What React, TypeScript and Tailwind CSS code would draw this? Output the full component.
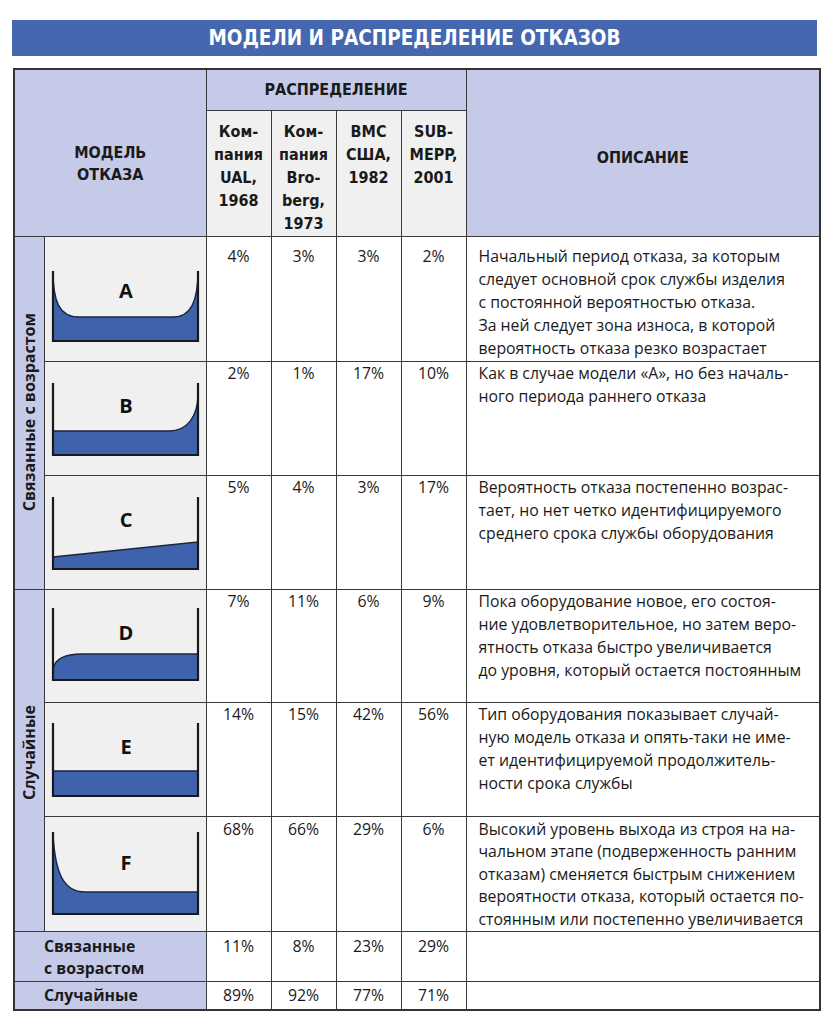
import React from "react";

const body = { fontFamily: '"Open Sans", "Noto Sans", sans-serif' };
const cond = { fontFamily: '"Liberation Sans Narrow", "DejaVu Sans Condensed", "Liberation Sans", sans-serif' };

type ChartDef = {
  letter: string;
  h: number;
  top: number;
  bottom: number;
  fill: string;
  curve: string;
  ly: number;
  pt: number;
  lh: number;
};

const charts: ChartDef[] = [
  {
    letter: "A",
    h: 125,
    top: 34,
    bottom: 104,
    fill: "M8,34 C8,64 14,80 34,80 L128,80 C146,80 153,64 153,34 L153,104 L8,104 Z",
    curve: "M8,34 C8,64 14,80 34,80 L128,80 C146,80 153,64 153,34",
    ly: 54,
    pt: 8,
    lh: 23,
  },
  {
    letter: "B",
    h: 114,
    top: 21,
    bottom: 93,
    fill: "M8,69 L124,69 C142,69 153,55 153,32 L153,93 L8,93 Z",
    curve: "M8,69 L124,69 C142,69 153,55 153,32",
    ly: 44,
    pt: 0,
    lh: 23,
  },
  {
    letter: "C",
    h: 114,
    top: 21,
    bottom: 93,
    fill: "M8,81 L153,66 L153,93 L8,93 Z",
    curve: "M8,81 L153,66",
    ly: 44,
    pt: 0,
    lh: 23,
  },
  {
    letter: "D",
    h: 113,
    top: 18,
    bottom: 90,
    fill: "M8,79 C10,68 20,64 37,64 L153,64 L153,90 L8,90 Z",
    curve: "M8,79 C10,68 20,64 37,64 L153,64",
    ly: 43,
    pt: 0,
    lh: 23,
  },
  {
    letter: "E",
    h: 114,
    top: 20,
    bottom: 93,
    fill: "M8,68 L153,68 L153,93 L8,93 Z",
    curve: "M8,68 L153,68",
    ly: 44,
    pt: 0,
    lh: 23,
  },
  {
    letter: "F",
    h: 115,
    top: 15,
    bottom: 97,
    fill: "M8,17 C10,55 18,75 40,75 L153,75 L153,97 L8,97 Z",
    curve: "M8,17 C10,55 18,75 40,75 L153,75",
    ly: 46,
    pt: 1,
    lh: 22.5,
  },
];

function Chart({ c }: { c: ChartDef }) {
  const h = c.h - 2;
  return (
    <svg width={162} height={h} viewBox={`0 0 162 ${h}`} className="block">
      <path d={c.fill} fill="#3f62ad" />
      <path d={c.curve} fill="none" stroke="#1c2540" strokeWidth={1.5} />
      <path
        d={`M8,${c.top} L8,${c.bottom} L153,${c.bottom} L153,${c.top}`}
        fill="none"
        stroke="#1a1a1a"
        strokeWidth={2.2}
      />
      <text
        x={81}
        y={c.ly + 7}
        textAnchor="middle"
        fontSize={20}
        fontWeight={700}
        fill="#111"
        fontFamily='"Open Sans", "Noto Sans", sans-serif'
      >
        {c.letter}
      </text>
    </svg>
  );
}

const values = [
  ["4%", "3%", "3%", "2%"],
  ["2%", "1%", "17%", "10%"],
  ["5%", "4%", "3%", "17%"],
  ["7%", "11%", "6%", "9%"],
  ["14%", "15%", "42%", "56%"],
  ["68%", "66%", "29%", "6%"],
];

const descs: string[][] = [
  [
    "Начальный период отказа, за которым",
    "следует основной срок службы изделия",
    "с постоянной вероятностью отказа.",
    "За ней следует зона износа, в которой",
    "вероятность отказа резко возрастает",
  ],
  ["Как в случае модели «А», но без началь-", "ного периода раннего отказа"],
  [
    "Вероятность отказа постепенно возрас-",
    "тает, но нет четко идентифицируемого",
    "среднего срока службы оборудования",
  ],
  [
    "Пока оборудование новое, его состоя-",
    "ние удовлетворительное, но затем веро-",
    "ятность отказа быстро увеличивается",
    "до уровня, который остается постоянным",
  ],
  [
    "Тип оборудования показывает случай-",
    "ную модель отказа и опять-таки не име-",
    "ет идентифицируемой продолжитель-",
    "ности срока службы",
  ],
  [
    "Высокий уровень выхода из строя на на-",
    "чальном этапе (подверженность ранним",
    "отказам) сменяется быстрым снижением",
    "вероятности отказа, который остается по-",
    "стоянным или постепенно увеличивается",
  ],
];

const bd = "border border-[#3a3a3a]";

export default function App() {
  return (
    <div className="w-[829px] h-[1024px] bg-white px-[12px] pt-[20px] text-[#1a1a1a]" style={body}>
      <div
        className="h-[36px] bg-[#4567b0] flex items-center justify-center text-white font-bold text-[20.5px]"
        style={cond}
      >
        МОДЕЛИ И РАСПРЕДЕЛЕНИЕ ОТКАЗОВ
      </div>
      <table className="mt-[12px] ml-[1px] w-[806px] table-fixed border-collapse border-2 border-[#333]">
        <colgroup>
          <col className="w-[30px]" />
          <col className="w-[162px]" />
          <col className="w-[65px]" />
          <col className="w-[65px]" />
          <col className="w-[65px]" />
          <col className="w-[65px]" />
          <col className="w-[354px]" />
        </colgroup>
        <thead>
          <tr className="h-[41px]">
            <th
              rowSpan={2}
              colSpan={2}
              className={`${bd} bg-[#c6cae9] text-[16px] font-bold leading-[22px] pt-[22px]`}
              style={cond}
            >
              МОДЕЛЬ
              <br />
              ОТКАЗА
            </th>
            <th colSpan={4} className={`${bd} bg-[#c6cae9] text-[16px] font-bold`} style={cond}>
              РАСПРЕДЕЛЕНИЕ
            </th>
            <th
              rowSpan={2}
              className={`${bd} bg-[#c6cae9] text-[16px] font-bold pt-[10px]`}
              style={cond}
            >
              ОПИСАНИЕ
            </th>
          </tr>
          <tr className="h-[126px]">
            {[
              ["Ком-", "пания", "UAL,", "1968"],
              ["Ком-", "пания", "Bro-", "berg,", "1973"],
              ["BMC", "США,", "1982"],
              ["SUB-", "MEPP,", "2001"],
            ].map((lines, i) => (
              <th
                key={i}
                className={`${bd} bg-[#f0f0f0] align-top pt-[9px] text-[16px] font-bold leading-[23px]`}
                style={cond}
              >
                {lines.map((l, j) => (
                  <div key={j}>{l}</div>
                ))}
              </th>
            ))}
          </tr>
        </thead>
        <tbody>
          {charts.map((c, i) => (
            <tr key={c.letter} style={{ height: c.h }}>
              {i === 0 && (
                <td rowSpan={3} className={`${bd} bg-[#c6cae9] p-0`}>
                  <div className="flex items-center justify-center">
                    <span className="[writing-mode:vertical-rl] rotate-180 font-bold text-[16px] whitespace-nowrap">
                      Связанные с возрастом
                    </span>
                  </div>
                </td>
              )}
              {i === 3 && (
                <td rowSpan={3} className={`${bd} bg-[#c6cae9] p-0`}>
                  <div className="flex items-center justify-center pb-[16px]">
                    <span className="[writing-mode:vertical-rl] rotate-180 font-bold text-[16px] whitespace-nowrap">
                      Случайные
                    </span>
                  </div>
                </td>
              )}
              <td className={`${bd} bg-[#f0f0f0] p-0 align-top`}>
                <Chart c={c} />
              </td>
              {values[i].map((v, j) => (
                <td
                  key={j}
                  className={`${bd} align-top text-center text-[15.8px]`}
                  style={{ paddingTop: c.pt, lineHeight: `${c.lh}px` }}
                >
                  {v}
                </td>
              ))}
              <td
                className={`${bd} align-top pl-[12px] text-[15.8px]`}
                style={{ paddingTop: c.pt, lineHeight: `${c.lh}px` }}
              >
                {descs[i].map((l, j) => (
                  <div key={j} className="whitespace-nowrap">
                    {l}
                  </div>
                ))}
              </td>
            </tr>
          ))}
          <tr className="h-[50px]">
            <td
              colSpan={2}
              className={`${bd} bg-[#c6cae9] align-top pl-[29px] pt-[3px] font-bold text-[15.8px] leading-[22px]`}
            >
              Связанные
              <br />с возрастом
            </td>
            {["11%", "8%", "23%", "29%"].map((v, j) => (
              <td key={j} className={`${bd} align-top text-center pt-[3px] text-[15.8px] leading-[22px]`}>
                {v}
              </td>
            ))}
            <td className={bd}></td>
          </tr>
          <tr className="h-[29px]">
            <td colSpan={2} className={`${bd} bg-[#c6cae9] pl-[29px] p-0 font-bold text-[15.8px] leading-[22px]`}>
              Случайные
            </td>
            {["89%", "92%", "77%", "71%"].map((v, j) => (
              <td key={j} className={`${bd} text-center p-0 text-[15.8px] leading-[22px]`}>
                {v}
              </td>
            ))}
            <td className={bd}></td>
          </tr>
        </tbody>
      </table>
    </div>
  );
}
